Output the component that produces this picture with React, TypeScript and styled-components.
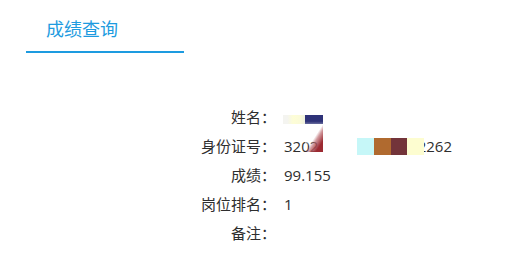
import styled, { createGlobalStyle } from 'styled-components';

const GlobalStyle = createGlobalStyle`
  body {
    margin: 0;
    background: #fff;
    font-family: 'Open Sans', 'Noto Sans CJK SC', sans-serif;
  }
`;

const Header = styled.div`
  padding-left: 26px;
`;

const Tab = styled.div`
  width: 138px;
  height: 28px;
  padding: 15px 0 8px 20px;
  line-height: 28px;
  font-size: 18px;
  color: #1d9be0;
  border-bottom: 2px solid #1d9be0;
`;

const Info = styled.div`
  margin-top: 50px;
  padding-left: 156px;
  font-size: 15px;
  color: #2e2e2e;
`;

const Row = styled.div`
  display: flex;
  align-items: center;
  height: 29px;
  line-height: 29px;
`;

const Label = styled.div`
  width: 120px;
  text-align: right;
`;

const Value = styled.div`
  position: relative;
  display: flex;
  align-items: center;
  height: 29px;
  margin-left: 8px;
`;

// 打码块
const Patch = styled.span<{ $left: number; $top: number; $w: number; $h: number; $bg: string }>`
  position: absolute;
  left: ${(p) => p.$left}px;
  top: ${(p) => p.$top}px;
  width: ${(p) => p.$w}px;
  height: ${(p) => p.$h}px;
  background: ${(p) => p.$bg};
  z-index: 2;
`;

const Gap = styled.span<{ $w: number }>`
  display: inline-block;
  width: ${(p) => p.$w}px;
`;

const Cell = styled.span<{ $bg: string }>`
  position: relative;
  z-index: 2;
  display: inline-block;
  width: 16.75px;
  height: 17px;
  background: ${(p) => p.$bg};
`;

const Tail = styled.span`
  margin-left: -6.3px;
`;

const mosaic = ['#c6f7f8', '#b06a2f', '#73343a', '#fdfdd0'];

function App() {
  return (
    <>
      <GlobalStyle />
      <Header>
        <Tab>成绩查询</Tab>
      </Header>
      <Info>
        <Row>
          <Label>姓名：</Label>
          <Value>
            <Patch
              $left={-1}
              $top={11.5}
              $w={22}
              $h={9.5}
              $bg="linear-gradient(to right, #f4f4f0 20%, #fdfdd6 45%, #fbfbd8 75%, #eef0e0)"
            />
            <Patch $left={21} $top={11.5} $w={18} $h={9.5} $bg="linear-gradient(to bottom, #2e3278 70%, #6a6e9e)" />
            <Patch
              $left={21}
              $top={21}
              $w={18}
              $h={28}
              $bg="linear-gradient(to bottom right, rgba(255,255,255,0.9) 25%, rgba(255,255,255,0) 50%, rgba(190,110,116,0.7) 60%, #9c2a32 80%)"
            />
          </Value>
        </Row>
        <Row>
          <Label>身份证号：</Label>
          <Value>
            3202
            <Gap $w={38.7} />
            {mosaic.map((c) => (
              <Cell key={c} $bg={c} />
            ))}
            <Tail>2262</Tail>
          </Value>
        </Row>
        <Row>
          <Label>成绩：</Label>
          <Value>99.155</Value>
        </Row>
        <Row>
          <Label>岗位排名：</Label>
          <Value>1</Value>
        </Row>
        <Row>
          <Label>备注：</Label>
          <Value />
        </Row>
      </Info>
    </>
  );
}

export default App;
